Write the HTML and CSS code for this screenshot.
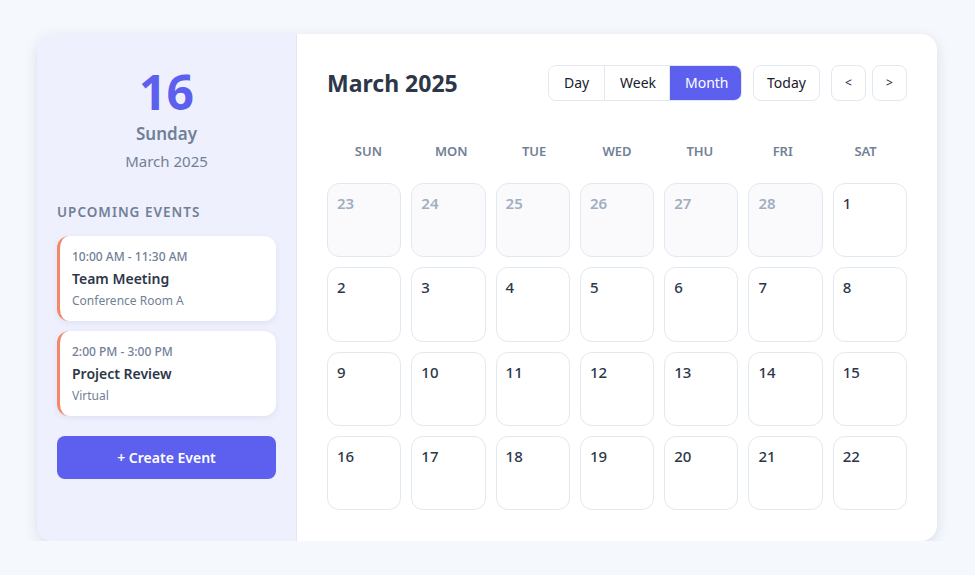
FILE: index.html
```html
<!DOCTYPE html>
<html lang="en">
<head>
    <meta charset="UTF-8">
    <meta name="viewport" content="width=device-width, initial-scale=1.0">
    <title>Calendar</title>
    <link rel="stylesheet" href="styles.css">
</head>
<body>
<div class="calendar">
    <aside class="sidebar">
        <div class="today-box">
            <div class="today-num">16</div>
            <div class="today-day">Sunday</div>
            <div class="today-month">March 2025</div>
        </div>
        <h3 class="events-title">Upcoming Events</h3>
        <div class="event">
            <div class="event-time">10:00 AM - 11:30 AM</div>
            <div class="event-name">Team Meeting</div>
            <div class="event-place">Conference Room A</div>
        </div>
        <div class="event">
            <div class="event-time">2:00 PM - 3:00 PM</div>
            <div class="event-name">Project Review</div>
            <div class="event-place">Virtual</div>
        </div>
        <button class="create-btn">+ Create Event</button>
    </aside>
    <main class="main">
        <div class="top">
            <h1 class="title">March 2025</h1>
            <div class="controls">
                <div class="views">
                    <button class="view">Day</button>
                    <button class="view">Week</button>
                    <button class="view active">Month</button>
                </div>
                <button class="btn today-btn">Today</button>
                <div class="arrows">
                    <button class="btn arrow">&lt;</button>
                    <button class="btn arrow">&gt;</button>
                </div>
            </div>
        </div>
        <div class="weekdays">
            <span>SUN</span><span>MON</span><span>TUE</span><span>WED</span><span>THU</span><span>FRI</span><span>SAT</span>
        </div>
        <div class="grid">
            <div class="cell other">23</div>
            <div class="cell other">24</div>
            <div class="cell other">25</div>
            <div class="cell other">26</div>
            <div class="cell other">27</div>
            <div class="cell other">28</div>
            <div class="cell">1</div>
            <div class="cell">2</div>
            <div class="cell">3</div>
            <div class="cell">4</div>
            <div class="cell">5</div>
            <div class="cell">6</div>
            <div class="cell">7</div>
            <div class="cell">8</div>
            <div class="cell">9</div>
            <div class="cell">10</div>
            <div class="cell">11</div>
            <div class="cell">12</div>
            <div class="cell">13</div>
            <div class="cell">14</div>
            <div class="cell">15</div>
            <div class="cell">16</div>
            <div class="cell">17</div>
            <div class="cell">18</div>
            <div class="cell">19</div>
            <div class="cell">20</div>
            <div class="cell">21</div>
            <div class="cell">22</div>
        </div>
    </main>
</div>
</body>
</html>
```

FILE: styles.css
```css
* {
    box-sizing: border-box;
}
body {
    margin: 0;
    padding: 34px 0 0 37px;
    background: #f5f8fc;
    font-family: "Noto Sans", "Open Sans", sans-serif;
    color: #2d3748;
}
.calendar {
    display: flex;
    width: 900px;
    height: 507px;
    background: #fff;
    border-radius: 16px;
    overflow: hidden;
    box-shadow: 0 4px 14px rgba(30, 40, 80, 0.12);
}
.sidebar {
    width: 260px;
    flex-shrink: 0;
    background: #eef0fe;
    border-right: 1px solid #e2e6f0;
    padding: 26px 20px 20px;
}
.today-box {
    text-align: center;
}
.today-num {
    font-size: 48px;
    font-weight: 700;
    line-height: 64px;
    color: #5d5fef;
}
.today-day {
    font-size: 17px;
    font-weight: 600;
    color: #718096;
    line-height: 24px;
    margin-top: -2px;
}
.today-month {
    font-size: 15px;
    color: #718096;
    line-height: 22px;
    margin-top: 4px;
}
.events-title {
    margin: 31px 0 15px;
    font-size: 13.5px;
    font-weight: 600;
    letter-spacing: 1px;
    text-transform: uppercase;
    color: #718096;
    line-height: 18px;
}
.event {
    background: #fff;
    border-radius: 12px;
    border-left: 3px solid #f4876a;
    padding: 12px 12px 10px;
    margin-bottom: 10px;
    height: 85px;
    box-shadow: 0 2px 6px rgba(60, 70, 120, 0.08);
}
.event-time {
    font-size: 12px;
    font-weight: 500;
    color: #718096;
    line-height: 18px;
}
.event-name {
    font-size: 14px;
    font-weight: 600;
    color: #2d3748;
    line-height: 20px;
    margin-top: 3px;
}
.event-place {
    font-size: 12px;
    color: #718096;
    line-height: 18px;
    margin-top: 3px;
}
.create-btn {
    display: block;
    width: 100%;
    height: 43px;
    margin-top: 20px;
    border: none;
    border-radius: 8px;
    background: #5d5fef;
    color: #fff;
    font: 600 14px "Noto Sans", sans-serif;
}
.main {
    flex: 1;
    padding: 31px 30px 0 30px;
}
.top {
    display: flex;
    justify-content: space-between;
    align-items: center;
    height: 35px;
}
.title {
    margin: 0;
    font-size: 23px;
    font-weight: 700;
    color: #2d3748;
}
.controls {
    display: flex;
    align-items: center;
    gap: 11px;
}
.views {
    display: flex;
    border: 1px solid #e2e8f0;
    border-radius: 8px;
    overflow: hidden;
    height: 36px;
}
.view {
    border: none;
    border-right: 1px solid #e2e8f0;
    background: #fff;
    font: 14px "Noto Sans", sans-serif;
    color: #1a202c;
    padding: 0 15px;
}
.view:first-child {
    width: 56px;
}
.view:nth-child(2) {
    width: 65px;
}
.view:last-child {
    width: 71px;
    border-right: none;
}
.view.active {
    background: #5d5fef;
    color: #fff;
}
.btn {
    height: 36px;
    border: 1px solid #e2e8f0;
    border-radius: 8px;
    background: #fff;
    font: 14px "Noto Sans", sans-serif;
    color: #1a202c;
}
.today-btn {
    width: 67px;
    padding: 0;
}
.arrows {
    display: flex;
    gap: 6px;
}
.arrow {
    width: 35px;
    font-size: 12px;
}
.weekdays {
    display: grid;
    grid-template-columns: repeat(7, 1fr);
    margin-top: 30px;
    height: 42px;
    align-items: center;
    margin-bottom: 11px;
}
.weekdays span {
    text-align: center;
    font-size: 13px;
    font-weight: 600;
    color: #718096;
}
.grid {
    display: grid;
    grid-template-columns: repeat(7, 1fr);
    gap: 10px;
}
.cell {
    aspect-ratio: 1;
    border: 1px solid #e2e8f0;
    border-radius: 12px;
    padding: 8px 9px;
    font-size: 15px;
    font-weight: 500;
    color: #2d3748;
    line-height: 22px;
}
.cell.other {
    background: #fafafc;
    color: #a0aec0;
    font-weight: 600;
}
```
